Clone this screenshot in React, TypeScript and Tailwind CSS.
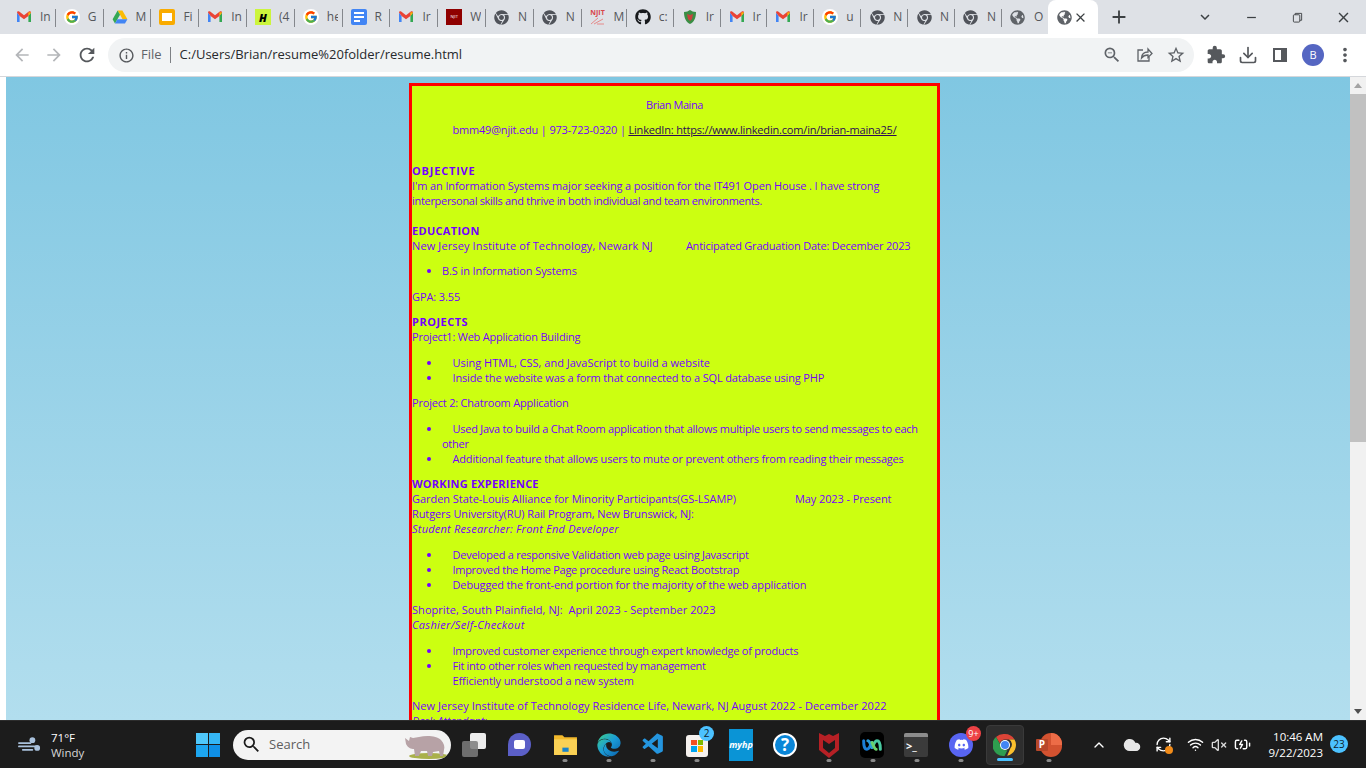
import React from 'react';
import { FaChrome, FaDiscord, FaEdge, FaGithub, FaGlobeAmericas } from 'react-icons/fa';
import { FcGoogle } from 'react-icons/fc';
import { VscVscode } from 'react-icons/vsc';
import {
  MdArrowBack,
  MdArrowForward,
  MdExtension,
  MdInfoOutline,
  MdMoreVert,
  MdRefresh,
  MdStarBorder,
  MdZoomOut,
  MdClose,
  MdAdd,
  MdKeyboardArrowDown,
  MdRemove,
  MdSearch,
} from 'react-icons/md';
import { ChevronUp, Cloud, Download, RefreshCw, VolumeX, Wifi, BatteryCharging } from 'lucide-react';

const Gmail = () => (
  <svg viewBox="0 0 16 16" className="w-4 h-4">
    <path d="M1 3.5V13h2.6V7L1 3.5z" fill="#4285f4" />
    <path d="M15 3.5V13h-2.6V7L15 3.5z" fill="#34a853" />
    <path d="M1 3.5C1 2.2 2.4 1.8 3.2 2.5L8 6.2l4.8-3.7c.8-.7 2.2-.3 2.2 1L12.4 7 8 10.2 3.6 7 1 3.5z" fill="#ea4335" />
    <path d="M12.4 3.2 15 3.5 12.4 7V3.2z" fill="#fbbc04" />
  </svg>
);

const Google = () => (
  <span className="w-4 h-4 rounded-full bg-white flex items-center justify-center">
    <FcGoogle size={14} />
  </span>
);

const Drive = () => (
  <svg viewBox="0 0 16 16" className="w-4 h-4">
    <path d="M5.6 1.5h4.8l5 8.8h-4.8z" fill="#fbbc04" />
    <path d="M5.6 1.5.6 10.3 3 14.5l5-8.8z" fill="#34a853" />
    <path d="M5.4 10.3h10l-2.4 4.2H3z" fill="#4285f4" />
  </svg>
);

const Slides = () => (
  <span className="w-4 h-4 rounded-[2px] bg-[#f9ab00] flex items-center justify-center">
    <span className="w-[10px] h-[8px] bg-white" />
  </span>
);

const Hack = () => (
  <span className="w-4 h-4 bg-[#ccf53c] flex items-center justify-center text-[11px] leading-none font-black italic text-black">H</span>
);

const Docs = () => (
  <span className="w-4 h-4 rounded-[2px] bg-[#4285f4] flex flex-col justify-center gap-[2px] pl-[3px]">
    <span className="w-[10px] h-[2px] bg-white" />
    <span className="w-[10px] h-[2px] bg-white" />
    <span className="w-[6px] h-[2px] bg-white" />
  </span>
);

const NjitBox = () => (
  <span className="w-4 h-4 bg-[#8f0000] flex items-center justify-center text-[4px] leading-none text-white">NJIT</span>
);

const NjitLogo = () => (
  <span className="w-4 h-4 flex flex-col items-center text-[7px] leading-[8px] font-bold text-[#d8454a]">
    NJIT
    <svg viewBox="0 0 16 8" className="w-4 h-2">
      <path d="M1 7 8 1M4 7l9-5M7 7h7" stroke="#e58a8a" strokeWidth="1" fill="none" />
    </svg>
  </span>
);

const Shield = () => (
  <svg viewBox="0 0 16 16" className="w-4 h-4">
    <path d="M2 3c3 0 4-1 6-2 2 1 3 2 6 2 0 6-2 10-6 12C4 13 2 9 2 3z" fill="#3b8e45" />
    <path d="M5 5l3 1 3-1-1 5-2 2-2-2z" fill="#c9423f" />
  </svg>
);

const ChromeGray = () => <FaChrome size={15} className="text-[#50535a]" />;
const Globe = () => <FaGlobeAmericas size={15} className="text-[#5f6368]" />;
const Git = () => <FaGithub size={16} className="text-[#17191c]" />;

const tabs: [React.ReactNode, string][] = [
  [<Gmail />, 'In'],
  [<Google />, 'G'],
  [<Drive />, 'M'],
  [<Slides />, 'Fi'],
  [<Gmail />, 'In'],
  [<Hack />, '(4'],
  [<Google />, 'he'],
  [<Docs />, 'R'],
  [<Gmail />, 'Ir'],
  [<NjitBox />, 'W'],
  [<ChromeGray />, 'N'],
  [<ChromeGray />, 'N'],
  [<NjitLogo />, 'M'],
  [<Git />, 'c:'],
  [<Shield />, 'Ir'],
  [<Gmail />, 'Ir'],
  [<Gmail />, 'Ir'],
  [<Google />, 'u'],
  [<ChromeGray />, 'N'],
  [<ChromeGray />, 'N'],
  [<ChromeGray />, 'N'],
  [<Globe />, 'O'],
];

const TabStrip = () => (
  <div className="h-[34px] bg-[#dee1e6] flex items-stretch pl-[8px] text-[12px] text-[#55575b]">
    {tabs.map(([icon, label], i) => (
      <div key={i} className={`shrink-0 flex items-center pl-[8px] relative ${i < 12 ? 'w-[47.8px]' : i === 12 ? 'w-[45.2px]' : 'w-[46.9px]'}`}>
        <span className="w-4 h-4 flex items-center justify-center shrink-0">{icon}</span>
        <span className="ml-[8px] w-[11px] overflow-hidden whitespace-nowrap">{label}</span>
        {i < tabs.length - 1 && <span className="absolute right-0 top-[9px] h-[18px] w-px bg-[#84878c]" />}
      </div>
    ))}
    <div className="w-[50px] shrink-0 bg-white rounded-t-[8px] flex items-center pl-[9px] ml-[-1px]">
      <FaGlobeAmericas size={15} className="text-[#5f6368]" />
      <MdClose size={15} className="ml-[1px] text-[#3c4043]" />
    </div>
    <div className="flex items-center ml-[10px] text-[#3c4043]">
      <MdAdd size={22} />
    </div>
    <div className="ml-auto flex items-center text-[#3c4043]">
      <span className="w-[46px] flex justify-center"><MdKeyboardArrowDown size={18} /></span>
      <span className="w-[46px] flex justify-center"><MdRemove size={15} /></span>
      <span className="w-[46px] flex justify-center">
        <svg viewBox="0 0 12 12" className="w-[11px] h-[11px]" fill="none" stroke="#3c4043" strokeWidth="1">
          <rect x="1.5" y="3" width="7" height="8" rx="1" />
          <path d="M3.5 3V1.5h7V9H8.5" />
        </svg>
      </span>
      <span className="w-[46px] flex justify-center"><MdClose size={17} /></span>
    </div>
  </div>
);

const Toolbar = () => (
  <div className="h-[43px] bg-white flex items-center border-b border-[#d5d7db] text-[#5f6368]">
    <div className="w-[108px] flex items-center shrink-0 pl-[12px] gap-[12px]">
      <MdArrowBack size={20} className="text-[#b4b6b9]" />
      <MdArrowForward size={20} className="text-[#b4b6b9]" />
      <MdRefresh size={22} className="text-[#55585c]" />
    </div>
    <div className="w-[1086px] h-[34px] bg-[#f1f3f4] rounded-full flex items-center pl-[10px] pr-[8px] shrink-0">
      <MdInfoOutline size={17} className="text-[#55585c]" />
      <span className="ml-[6px] text-[13px] text-[#5f6368]">File</span>
      <span className="ml-[8px] w-px h-[16px] bg-[#7d8084]" />
      <span className="ml-[9px] text-[13px] text-[#27292c]">C:/Users/Brian/resume%20folder/resume.html</span>
      <div className="ml-auto flex items-center gap-[12px] text-[#5f6368]">
        <MdZoomOut size={20} />
        <svg viewBox="0 0 20 20" className="w-[20px] h-[20px]" fill="none" stroke="#5f6368" strokeWidth="1.3">
          <path d="M9 5H4v11h11v-4" />
          <path d="M7.5 13c.3-4 3-6 6.5-6V4l4 4.5-4 4V10c-3 0-5 1-6.5 3z" />
        </svg>
        <MdStarBorder size={20} />
      </div>
    </div>
    <div className="flex items-center pl-[12px] gap-[12px] text-[#55585c]">
      <MdExtension size={20} />
      <Download size={20} />
      <span className="w-[20px] h-[20px] flex items-center justify-center">
        <span className="w-[14px] h-[14px] border-[2px] border-[#55585c] border-r-[6px]" />
      </span>
      <span className="w-[22px] h-[22px] rounded-full bg-[#5566c2] text-white text-[11px] flex items-center justify-center">B</span>
      <MdMoreVert size={22} className="-ml-[2px]" />
    </div>
  </div>
);

const P = ({ className = '', children }: { className?: string; children: React.ReactNode }) => (
  <p className={`my-[10.5px] ${className}`}>{children}</p>
);

const Gap = () => <span className="inline-block w-[10.5px]" />;

const Bullets = ({ items }: { items: React.ReactNode[] }) => (
  <ul className="list-disc pl-[30px] my-[10.5px]">
    {items.map((item, i) => (
      <li key={i}>{item}</li>
    ))}
  </ul>
);

const Resume = () => (
  <div className="ml-[403px] mt-[6px] w-[531px] border-[3px] border-[#ff0000] bg-[#ccff11] text-[#7400ff] text-[11px] leading-[15px] [font-family:'Open_Sans',sans-serif] tracking-[-0.1px]">
    <P className="text-center tracking-[-0.45px]">Brian Maina</P>
    <P className="text-center mb-[25.9px] tracking-[-0.18px]">
      bmm49@njit.edu | 973-723-0320 | <span className="text-[#2b0a55] underline">LinkedIn: https://www.linkedin.com/in/brian-maina25/</span>
    </P>
    <p className="font-bold tracking-[0.8px]">OBJECTIVE</p>
    <p className="tracking-[-0.12px]">I'm an Information Systems major seeking a position for the IT491 Open House . I have strong</p>
    <p className="tracking-[-0.3px]">interpersonal skills and thrive in both individual and team environments.</p>
    <p className="mt-[15px] font-bold tracking-[0.3px]">EDUCATION</p>
    <p className="whitespace-nowrap">
      <span className="tracking-[0.12px]">New Jersey Institute of Technology, Newark NJ</span>
      <span className="ml-[33px] tracking-[-0.21px]">Anticipated Graduation Date: December 2023</span>
    </p>
    <Bullets items={['B.S in Information Systems']} />
    <P>GPA: 3.55</P>
    <p className="font-bold tracking-[0.5px]">PROJECTS</p>
    <p className="tracking-[-0.22px]">Project1: Web Application Building</p>
    <Bullets
      items={[
        <span className="tracking-[0px]"><Gap />Using HTML, CSS, and JavaScript to build a website</span>,
        <span className="tracking-[-0.15px]"><Gap />Inside the website was a form that connected to a SQL database using PHP</span>,
      ]}
    />
    <P className="tracking-[-0.2px]">Project 2: Chatroom Application</P>
    <Bullets
      items={[
        <span className="tracking-[-0.25px]"><Gap />Used Java to build a Chat Room application that allows multiple users to send messages to each<br />other</span>,
        <span className="tracking-[-0.18px]"><Gap />Additional feature that allows users to mute or prevent others from reading their messages</span>,
      ]}
    />
    <p className="font-bold tracking-[0.2px]">WORKING EXPERIENCE</p>
    <p className="whitespace-nowrap">
      <span className="tracking-[-0.04px]">Garden State-Louis Alliance for Minority Participants(GS-LSAMP)</span>
      <span className="ml-[59px]">May 2023 - Present</span>
    </p>
    <p>Rutgers University(RU) Rail Program, New Brunswick, NJ:</p>
    <p className="italic tracking-[0.23px]">Student Researcher: Front End Developer</p>
    <Bullets
      items={[
        <span className="tracking-[-0.25px]"><Gap />Developed a responsive Validation web page using Javascript</span>,
        <span className="tracking-[-0.29px]"><Gap />Improved the Home Page procedure using React Bootstrap</span>,
        <span className="tracking-[-0.14px]"><Gap />Debugged the front-end portion for the majority of the web application</span>,
      ]}
    />
    <p className="whitespace-pre tracking-[0.05px]">Shoprite, South Plainfield, NJ:  April 2023 - September 2023</p>
    <p className="italic tracking-[0.33px]">Cashier/Self-Checkout</p>
    <ul className="list-disc pl-[30px] my-[10.5px]">
      <li className="tracking-[-0.23px]"><Gap />Improved customer experience through expert knowledge of products</li>
      <li className="tracking-[-0.28px]"><Gap />Fit into other roles when requested by management</li>
      <li className="list-none"><Gap />Efficiently understood a new system</li>
    </ul>
    <p className="tracking-[0.035px]">New Jersey Institute of Technology Residence Life, Newark, NJ August 2022 - December 2022</p>
    <p className="italic">Desk Attendant:</p>
    <div className="h-[200px]" />
  </div>
);

const Scrollbar = () => (
  <div className="w-[16px] shrink-0 bg-[#f1f1f1] flex flex-col items-center">
    <div className="h-[17px] flex items-center justify-center">
      <span className="w-0 h-0 border-x-[4px] border-x-transparent border-b-[5px] border-b-[#a3a3a3]" />
    </div>
    <div className="w-full h-[348px] bg-[#c1c1c1]" />
    <div className="mt-auto h-[17px] flex items-center justify-center">
      <span className="w-0 h-0 border-x-[4px] border-x-transparent border-t-[5px] border-t-[#505050]" />
    </div>
  </div>
);

const Dot = ({ on }: { on?: boolean }) => (
  <span className={`absolute bottom-[3px] left-1/2 -translate-x-1/2 h-[3px] rounded-full ${on ? 'w-[16px] bg-[#4cc2ff]' : 'w-[5px] bg-[#8a8a8a]'}`} />
);

const TaskIcon = ({ dot, active, children }: { dot?: boolean; active?: boolean; children: React.ReactNode }) => (
  <div className={`relative w-[38px] h-[40px] mx-[3px] flex items-center justify-center rounded-[4px] shrink-0 ${active ? 'bg-[#2e2e2e] border border-[#3a3a3a]' : ''}`}>
    {children}
    {dot && <Dot on={active} />}
  </div>
);

const Badge = ({ className, children }: { className: string; children: React.ReactNode }) => (
  <span className={`absolute rounded-full flex items-center justify-center leading-none ${className}`}>{children}</span>
);

const Rhino = () => (
  <svg viewBox="0 0 48 30" className="w-[48px] h-[30px]">
    <ellipse cx="26" cy="26" rx="20" ry="3" fill="#a9b04a" />
    <path d="M2 8l4 3 1-4 3 1 6-1c8-2 18-1 22 3 3 3 4 7 3 10l-1 6h-3l-1-5-6 1-1 4h-4l-1-5h-6l-2 5h-4l-1-7c-3 0-6-1-8-5z" fill="#b7a2a6" />
  </svg>
);

const Taskbar = () => (
  <div className="h-[48px] shrink-0 bg-[#1c1c1c] border-t border-[#2d2d2d] flex items-center text-white relative">
    <div className="w-[196px] shrink-0 flex items-center pl-[17px]">
      <svg viewBox="0 0 26 20" className="w-[25px] h-[20px]" fill="none" stroke="#a9c1dc" strokeWidth="1.8" strokeLinecap="round">
        <path d="M2 8h12M2 11.5h18M6 15h10" />
        <circle cx="16" cy="5" r="3" fill="#a9c1dc" stroke="none" />
        <circle cx="21" cy="13" r="3" fill="#a9c1dc" stroke="none" />
      </svg>
      <div className="ml-[9px] text-[11.5px] leading-[15px]">
        <div>71°F</div>
        <div className="text-[#d7d7d7]">Windy</div>
      </div>
    </div>
    <div className="w-[24px] h-[24px] grid grid-cols-2 gap-[1px] shrink-0">
      <span className="bg-[#4fc8fb]" />
      <span className="bg-[#35b6f5]" />
      <span className="bg-[#1da6f0]" />
      <span className="bg-[#0f8fe6]" />
    </div>
    <div className="ml-[13px] w-[218px] h-[30px] rounded-full bg-[#f3f3f3] flex items-center pl-[8px] overflow-hidden shrink-0">
      <MdSearch size={21} className="text-[#1b1b1b]" />
      <span className="ml-[7px] text-[13px] text-[#5d5d5d]">Search</span>
      <span className="ml-auto"><Rhino /></span>
    </div>
    <div className="ml-[4px] flex items-center">
      <TaskIcon>
        <span className="relative w-[24px] h-[24px] -translate-x-[3px]">
          <span className="absolute right-0 top-0 w-[16px] h-[16px] bg-[#ececec] rounded-[2px]" />
          <span className="absolute left-0 bottom-0 w-[16px] h-[16px] bg-[#7d7d7d]/85 rounded-[2px]" />
        </span>
      </TaskIcon>
      <TaskIcon>
        <span className="w-[23px] h-[23px] -translate-x-[2px] rounded-full rounded-bl-[4px] bg-[#5b5fc7] flex items-center justify-center">
          <span className="w-[11px] h-[9px] bg-white rounded-[2px]" />
        </span>
      </TaskIcon>
      <TaskIcon dot>
        <svg viewBox="0 0 24 24" className="w-[25px] h-[25px]">
          <path d="M1 3h8l2 2h12v17H1z" fill="#f2b92c" />
          <path d="M1 7h22v15H1z" fill="#fad155" />
          <path d="M9 15h6v4H9z" fill="#1a84c9" />
        </svg>
      </TaskIcon>
      <TaskIcon dot>
        <svg width="0" height="0" className="absolute">
          <linearGradient id="edgeFill" x1="0" y1="0" x2="1" y2="1">
            <stop offset="0" stopColor="#3fd08a" />
            <stop offset="0.5" stopColor="#1a9bd7" />
            <stop offset="1" stopColor="#0b5fa8" />
          </linearGradient>
        </svg>
        <FaEdge size={24} className="fill-[url(#edgeFill)]" />
      </TaskIcon>
      <TaskIcon dot>
        <VscVscode size={25} className="text-[#2495de]" />
      </TaskIcon>
      <TaskIcon dot>
        <span className="w-[22px] h-[22px] rounded-[3px] bg-[#f5f1ee] grid grid-cols-2 gap-[1px] p-[5px] mt-[2px]">
          <span className="bg-[#f25022]" />
          <span className="bg-[#7fba00]" />
          <span className="bg-[#00a4ef]" />
          <span className="bg-[#ffb900]" />
        </span>
        <Badge className="top-[1px] right-[2px] w-[15px] h-[15px] bg-[#4cc2ff] text-[#10222c] text-[10px]">2</Badge>
      </TaskIcon>
      <TaskIcon>
        <span className="w-[24px] h-[32px] bg-[#0a94d6] text-white text-[9px] italic font-bold flex items-center justify-center">myhp</span>
      </TaskIcon>
      <TaskIcon>
        <span className="w-[24px] h-[24px] rounded-full bg-[#0a86d8] border-[2px] border-white text-white text-[17px] font-bold flex items-center justify-center">?</span>
      </TaskIcon>
      <TaskIcon dot>
        <svg viewBox="0 0 22 28" className="w-[22px] h-[28px]">
          <path d="M1 2l6 3 4-2 4 2 6-3v17l-10 8L1 19z" fill="#b62025" />
          <path d="M5 9l6 4 6-4v8l-6 5-6-5z" fill="#1c1c1c" />
        </svg>
      </TaskIcon>
      <TaskIcon dot>
        <span className="w-[24px] h-[26px] -translate-x-[1px] rounded-[5px] bg-black flex items-center justify-center">
          <svg viewBox="0 0 24 16" className="w-[20px] h-[14px]" fill="none" strokeWidth="3.6" strokeLinecap="round">
            <path d="M12 5c-2 3-3 8-6 8S2 9 2 3" stroke="#1c7fd6" />
            <path d="M12 11c2-3 3-8 6-8s4 4 4 10" stroke="#49c9a0" />
            <path d="M7 3c2 0 3 4 5 8" stroke="#2a9ad8" />
            <path d="M17 13c-2 0-3-4-5-8" stroke="#6bd16a" />
          </svg>
        </span>
      </TaskIcon>
      <TaskIcon dot>
        <span className="w-[24px] h-[24px] -translate-x-[1px] rounded-[2px] bg-[#3b3b3b] overflow-hidden flex flex-col">
          <span className="h-[4px] bg-[#8c8c8c]" />
          <span className="text-[11px] leading-[18px] pl-[2px] font-bold">{'>_'}</span>
        </span>
      </TaskIcon>
      <TaskIcon dot>
        <span className="w-[24px] h-[24px] rounded-full bg-[#5865f2] flex items-center justify-center">
          <FaDiscord size={15} className="text-white" />
        </span>
        <Badge className="top-[1px] right-[-1px] w-[15px] h-[15px] bg-[#ed4245] text-white text-[9px]">9+</Badge>
      </TaskIcon>
      <TaskIcon dot active>
        <svg viewBox="0 0 48 48" className="w-[24px] h-[24px]">
          <path d="M24 2a22 22 0 0 1 19 11H24a11 11 0 0 0-10.5 7.5L6 8A22 22 0 0 1 24 2z" fill="#db4437" />
          <path d="M43 13a22 22 0 0 1-14.6 32.6L35 30a11 11 0 0 0-3-17z" fill="#fbc02d" />
          <path d="M6 8l9 16a11 11 0 0 0 14 10l-6 12A22 22 0 0 1 6 8z" fill="#2e9e4f" />
          <circle cx="24" cy="24" r="10" fill="#fff" />
          <circle cx="24" cy="24" r="8" fill="#4285f4" />
        </svg>
      </TaskIcon>
      <TaskIcon dot>
        <span className="relative w-[26px] h-[24px]">
          <span className="absolute right-0 top-0 w-[22px] h-[24px] rounded-full bg-[#d35230]" />
          <span className="absolute right-0 top-0 w-[11px] h-[12px] rounded-tr-full bg-[#ed6c47]" />
          <span className="absolute left-0 top-[6px] w-[12px] h-[12px] rounded-[1px] bg-[#b7472a] text-white text-[10px] font-bold flex items-center justify-center">P</span>
        </span>
      </TaskIcon>
    </div>
    <div className="absolute left-[1091px] top-0 h-full flex items-center">
      <ChevronUp size={16} className="text-white" />
      <Cloud size={18} className="ml-[16px] text-[#e6e6e6] fill-[#e6e6e6]" />
      <span className="relative ml-[14px]">
        <RefreshCw size={17} className="text-white" />
        <span className="absolute right-[-1px] bottom-[-1px] w-[8px] h-[8px] rounded-full bg-[#f28c1a]" />
      </span>
      <Wifi size={17} className="ml-[15px] text-white" />
      <VolumeX size={16} className="ml-[7px] text-[#d9d9d9]" />
      <BatteryCharging size={17} className="ml-[7px] text-white" />
    </div>
    <div className="absolute right-[43px] top-[8px] text-right text-[11.5px] leading-[16px]">
      <div>10:46 AM</div>
      <div>9/22/2023</div>
    </div>
    <Badge className="right-[18px] top-[14px] w-[18px] h-[18px] bg-[#4cc2ff] text-[#10222c] text-[10px]">23</Badge>
  </div>
);

export default function App() {
  return (
    <div className="w-[1366px] h-[768px] flex flex-col overflow-hidden bg-white [font-family:'Open_Sans',sans-serif]">
      <TabStrip />
      <Toolbar />
      <div className="flex-1 min-h-0 flex">
        <div className="w-[6px] shrink-0 bg-white" />
        <div className="flex-1 min-w-0 overflow-hidden bg-gradient-to-b from-[#80c7e2] to-[#b2deee]">
          <Resume />
        </div>
        <Scrollbar />
      </div>
      <Taskbar />
    </div>
  );
}
